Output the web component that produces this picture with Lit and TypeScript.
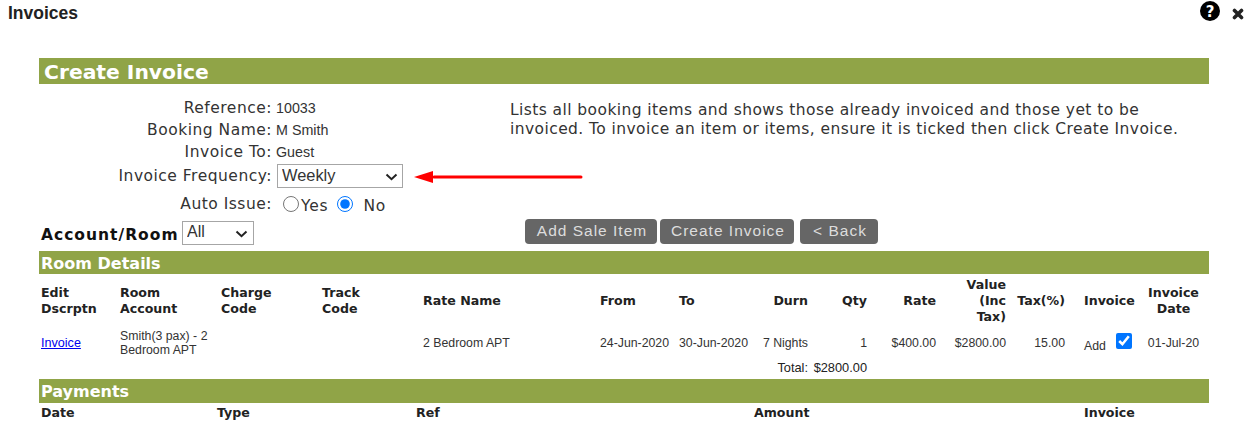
import { LitElement, html, css } from "lit";
import { customElement } from "lit/decorators.js";

@customElement("app-root")
export class AppRoot extends LitElement {
  static styles = css`
    :host { display: block; position: relative; width: 1246px; height: 425px; overflow: hidden; background: #fff; color: #333; font-family: "Liberation Sans", Arial, sans-serif; font-size: 12px; }
    .top { display: flex; align-items: flex-start; height: 58px; padding-left: 8px; }
    .title { font-size: 17.5px; font-weight: 700; color: #222; line-height: 18px; margin-top: 4px; flex: 1; }
    .help { margin-top: 1px; width: 20px; height: 20px; }
    .close { margin: 8px 2px 0 12px; width: 12px; height: 12px; }
    .main { margin-left: 39px; width: 1170px; }
    .bar { background: #90a447; color: #fff; font-family: "DejaVu Sans", Verdana, sans-serif; font-weight: 700; }
    .bar.big { height: 26px; line-height: 28px; font-size: 20.3px; padding-left: 5px; }
    .bar.sub { height: 23px; line-height: 25px; font-size: 16px; padding-left: 2px; }
    .bar.pay { height: 24px; }
    .form { display: flex; height: 135px; }
    .fields { width: 471px; padding-top: 13px; box-sizing: border-box; }
    .row { display: grid; grid-template-columns: 233px 1fr; column-gap: 5px; align-items: center; }
    .lab { text-align: right; font-family: "DejaVu Sans", Verdana, sans-serif; font-size: 15.5px; letter-spacing: 0.5px; color: #333; line-height: 21px; padding-top: 1px; white-space: nowrap; }
    .val { font-size: 14.3px; line-height: 22px; margin-left: -1px; }
    select { font-family: "Liberation Sans", Arial, sans-serif; background: #fff; color: #333; border: 1px solid #a6a6a6; border-radius: 0; padding: 0 0 0 4px; margin: 0; box-sizing: border-box; appearance: none; -webkit-appearance: none; display: block; width: 100%; height: 100%; }
    .selwrap { position: relative; }
    .selwrap svg { position: absolute; pointer-events: none; }
    .freqwrap { width: 126px; height: 24px; }
    .freqwrap select { font-size: 16.4px; padding-bottom: 2px; }
    .freqwrap svg { right: 5px; top: 9px; width: 13px; height: 8px; }
    .r-freq { margin-top: 1px; margin-bottom: 4px; }
    .radios { display: flex; align-items: center; height: 24px; }
    input[type="radio"] { width: 16px; height: 16px; margin: 0; }
    .radios label { display: flex; align-items: center; font-family: "DejaVu Sans", Verdana, sans-serif; font-size: 15.5px; letter-spacing: 0.8px; }
    .radios span { position: relative; top: 2px; }
    .yes { margin-left: 6px; }
    .yes span { margin-left: 2px; }
    .no { margin-left: 9px; }
    .no span { margin-left: 10px; }
    .desc { flex: 1; padding-top: 17px; font-family: "DejaVu Sans", Verdana, sans-serif; font-size: 15.5px; letter-spacing: 0.42px; line-height: 19px; color: #333; white-space: nowrap; }
    .actions { display: flex; align-items: flex-start; height: 32px; }
    .acct { font-family: "DejaVu Sans", Verdana, sans-serif; font-weight: 700; font-size: 15.5px; letter-spacing: 1px; line-height: 18px; color: #111; padding: 7px 0 0 2px; width: 141px; box-sizing: border-box; white-space: nowrap; }
    .acctwrap { width: 72px; height: 24px; margin-top: 2px; margin-left: 2px; }
    .acctwrap select { font-size: 16px; padding-bottom: 3px; }
    .acctwrap svg { right: 6px; top: 9px; width: 13px; height: 8px; }
    .btns { display: flex; margin-left: 271px; height: 25px; }
    .btn { background: #666; color: #ddd; border: 0; border-radius: 4px; font-family: "Liberation Sans", Arial, sans-serif; font-size: 15.5px; letter-spacing: 1px; padding: 0 0 2px 2px; height: 25px; }
    .b1 { width: 132px; margin-right: 3px; }
    .b2 { width: 134px; margin-right: 6px; }
    .b3 { width: 78px; }
    table { border-collapse: collapse; table-layout: fixed; width: 1170px; }
    th { font-family: "DejaVu Sans", Verdana, sans-serif; font-weight: 700; font-size: 12.6px; line-height: 16px; color: #222; text-align: left; padding: 2px; vertical-align: middle; }
    td { font-size: 12.3px; line-height: 14px; color: #333; padding: 2px; vertical-align: middle; }
    .head th { height: 53px; padding-top: 3px; padding-bottom: 2px; box-sizing: border-box; }
    .data td { height: 30px; padding-top: 1px; padding-bottom: 0; box-sizing: border-box; }
    .total td { height: 22px; padding-top: 0; padding-bottom: 0; box-sizing: border-box; font-size: 12.8px; color: #222; }
    .r { text-align: right; }
    .c { text-align: center; }
    .pl { padding-left: 17px; }
    .last { padding-right: 4px; }
    a { color: #00e; text-decoration: underline; font-size: 12.6px; }
    .add { display: flex; align-items: center; }
    .add span { position: relative; top: 3px; }
    .add input { width: 16px; height: 16px; margin: 0 0 0 10px; position: relative; top: -2px; }
    .payhead th { padding-top: 2px; padding-bottom: 1px; }
    .arrow { position: absolute; left: 412px; top: 168px; width: 174px; height: 18px; }
  `;

  chevron() {
    return html`<svg viewBox="0 0 13 8"><path d="M1.5 1.5L6.5 6.2L11.5 1.5" fill="none" stroke="#222" stroke-width="2"></path></svg>`;
  }

  render() {
    return html`
      <div class="top">
        <div class="title">Invoices</div>
        <svg class="help" viewBox="0 0 20 20">
          <circle cx="10" cy="10" r="10" fill="#000"></circle>
          <text x="10" y="15.5" text-anchor="middle" fill="#fff" font-family="DejaVu Sans" font-weight="700" font-size="15">?</text>
        </svg>
        <svg class="close" viewBox="0 0 12 12">
          <path d="M2.5 2.5L9.5 9.5M9.5 2.5L2.5 9.5" stroke="#222" stroke-width="3.6" stroke-linecap="round"></path>
        </svg>
      </div>
      <div class="main">
        <div class="bar big">Create Invoice</div>
        <div class="form">
          <div class="fields">
            <div class="row"><div class="lab">Reference:</div><div class="val">10033</div></div>
            <div class="row"><div class="lab">Booking Name:</div><div class="val">M Smith</div></div>
            <div class="row"><div class="lab">Invoice To:</div><div class="val">Guest</div></div>
            <div class="row r-freq"><div class="lab">Invoice Frequency:</div>
              <div class="selwrap freqwrap"><select><option>Weekly</option></select>${this.chevron()}</div>
            </div>
            <div class="row"><div class="lab">Auto Issue:</div>
              <div class="radios">
                <label class="yes"><input type="radio" name="auto" /><span>Yes</span></label>
                <label class="no"><input type="radio" name="auto" checked /><span>No</span></label>
              </div>
            </div>
          </div>
          <div class="desc">Lists all booking items and shows those already invoiced and those yet to be<br />invoiced. To invoice an item or items, ensure it is ticked then click Create Invoice.</div>
        </div>
        <div class="actions">
          <div class="acct">Account/Room</div>
          <div class="selwrap acctwrap"><select><option>All</option></select>${this.chevron()}</div>
          <div class="btns">
            <button class="btn b1">Add Sale Item</button>
            <button class="btn b2">Create Invoice</button>
            <button class="btn b3">&lt; Back</button>
          </div>
        </div>
        <div class="bar sub">Room Details</div>
        <table>
          <colgroup>
            <col style="width:79px" /><col style="width:101px" /><col style="width:101px" /><col style="width:101px" />
            <col style="width:177px" /><col style="width:79px" /><col style="width:75px" /><col style="width:58px" />
            <col style="width:59px" /><col style="width:69px" /><col style="width:70px" /><col style="width:59px" />
            <col style="width:73px" /><col style="width:69px" />
          </colgroup>
          <tr class="head">
            <th>Edit<br />Dscrptn</th><th>Room<br />Account</th><th>Charge<br />Code</th><th>Track<br />Code</th>
            <th>Rate Name</th><th>From</th><th>To</th><th class="r">Durn</th><th class="r">Qty</th><th class="r">Rate</th>
            <th class="r">Value<br />(Inc<br />Tax)</th><th class="r">Tax(%)</th><th class="pl">Invoice</th><th class="c last">Invoice<br />Date</th>
          </tr>
          <tr class="data">
            <td><a href="#">Invoice</a></td><td>Smith(3 pax) - 2<br />Bedroom APT</td><td></td><td></td>
            <td>2 Bedroom APT</td><td>24-Jun-2020</td><td>30-Jun-2020</td><td class="r">7 Nights</td><td class="r">1</td>
            <td class="r">$400.00</td><td class="r">$2800.00</td><td class="r">15.00</td>
            <td class="pl"><div class="add"><span>Add</span><input type="checkbox" checked /></div></td>
            <td class="c last">01-Jul-20</td>
          </tr>
          <tr class="total">
            <td colspan="8" class="r">Total:</td><td class="r">$2800.00</td><td colspan="5"></td>
          </tr>
        </table>
        <div class="bar sub pay">Payments</div>
        <table>
          <colgroup>
            <col style="width:176px" /><col style="width:199px" /><col style="width:338px" /><col style="width:57px" />
            <col style="width:273px" /><col style="width:127px" />
          </colgroup>
          <tr class="payhead"><th>Date</th><th>Type</th><th>Ref</th><th class="r">Amount</th><th></th><th>Invoice</th></tr>
        </table>
      </div>
      <svg class="arrow" viewBox="0 0 174 18">
        <path d="M22 9H169" stroke="#f00" stroke-width="3" stroke-linecap="round"></path>
        <path d="M2 9L21 3V15Z" fill="#f00"></path>
      </svg>
    `;
  }
}
